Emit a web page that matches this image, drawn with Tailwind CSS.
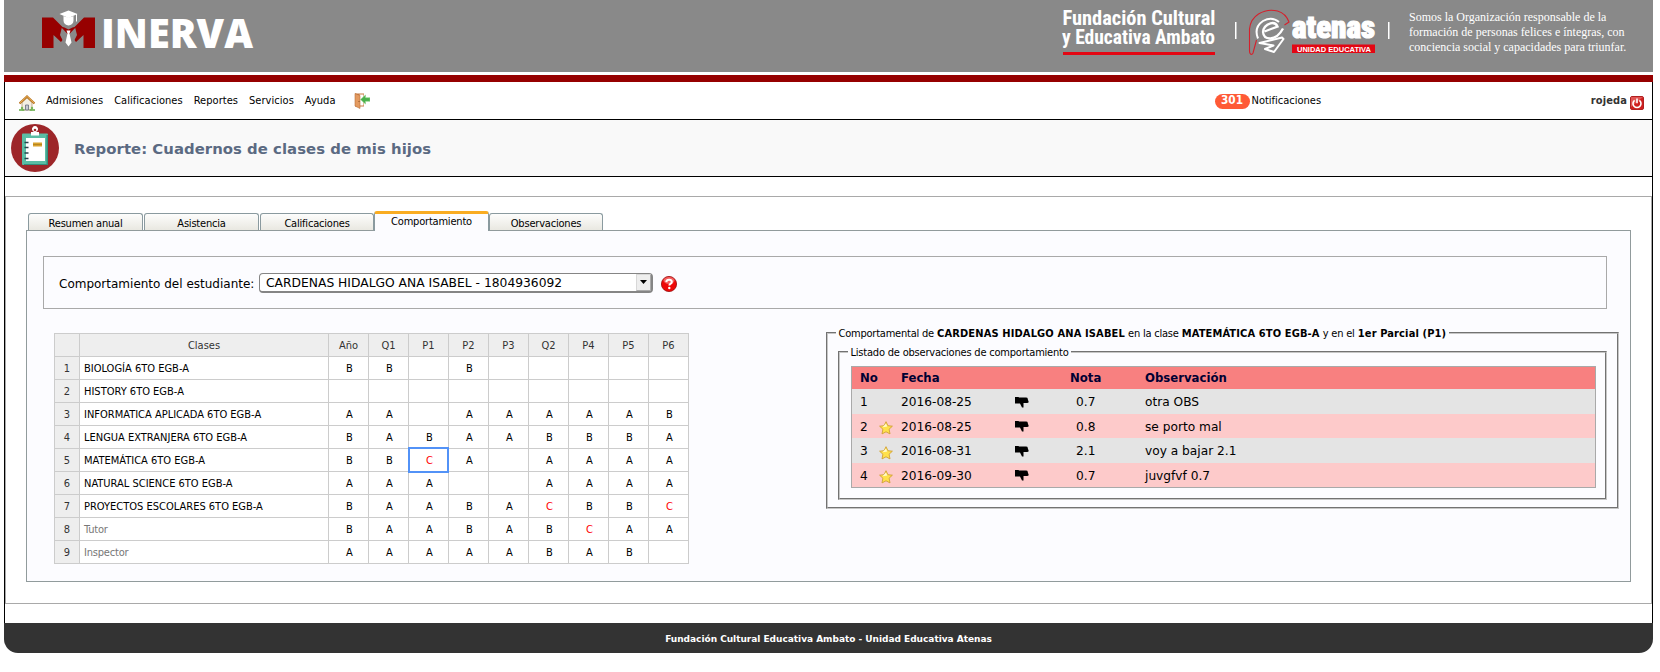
<!DOCTYPE html>
<html lang="es">
<head>
<meta charset="utf-8">
<title>Minerva</title>
<script src="https://cdn.jsdelivr.net/npm/@tailwindcss/browser@4"></script>
</head>
<body class="bg-white font-['DejaVu_Sans_Condensed','DejaVu_Sans',sans-serif] text-[11px] text-black">
<div class="ml-1 w-[1649px]">
  <header class="flex h-[72px] bg-[#898989]">
    <svg class="ml-9 mt-2 h-11 w-[225px] shrink-0" viewBox="40 8 225 44">
      <path d="M42 17.500h11L68.500 33 84 17.500h11V48H83.500V35L76 42l-3.500-4.500h-8L61 42l-7.500-7v13H42z" fill="#970000"/>
      <path d="M68.500 10.500l9 3.500-9 4-9-4z" fill="#fff"/>
      <path d="M63.500 16q5 2.500 10 0v4.500a5 5 0 0 1-10 0z" fill="#fff"/>
      <path d="M76.500 14v7.500" stroke="#fff" stroke-width="1"/>
      <path d="M62 27l6.500 2 6.500-2 2 8-6 12h-5l-6-12z" fill="#898989"/>
      <path d="M60.500 26.500l8 8.500 8-8.500-4 1-4 2-4-2z" fill="#970000"/>
      <path d="M66.500 30.500h4l-1 3 2 9-3 4-3-4 2-9z" fill="#fff"/>
      <text x="101" y="48" textLength="152" lengthAdjust="spacingAndGlyphs" font-family="Open Sans" font-weight="800" font-size="41.500" fill="#fff">INERVA</text>
    </svg>
    <svg class="ml-[795px] mt-1 h-14 w-[330px] shrink-0" viewBox="1060 4 330 56" fill="#fff">
      <text x="1062.500" y="25.300" textLength="153" lengthAdjust="spacingAndGlyphs" font-family="Roboto Condensed" font-weight="700" font-size="20">Fundación Cultural</text>
      <text x="1062" y="43.800" textLength="153" lengthAdjust="spacingAndGlyphs" font-family="Roboto Condensed" font-weight="700" font-size="20">y Educativa Ambato</text>
      <path d="M1063 52h152v3h-152z" fill="#e30613"/>
      <path d="M1235 22h1.500v17h-1.500zM1388 22h1.500v17h-1.500z"/>
      <path d="M1256.500 40l-3.500 13q-1 2-2.500 1-1-1-1-3V29q1-10 9-15 9-5.500 19-3 8.500 2.500 11.500 11l-4.500 3" fill="none" stroke="#d5202c" stroke-width="1.100"/>
      <path d="M1258 38.500q-4.500-11 5-17.500 9-5 16 1" fill="none" stroke="#fff" stroke-width="2"/>
      <path d="M1264.500 31.500l13-5q-2-4.500-7-3.200-7 2.200-7.500 8.700.5 6.500 7 6.500 8-.5 13-10" fill="none" stroke="#fff" stroke-width="2.300"/>
      <path d="M1282 37.500L1259.500 43l14 2.500-8.500 3.500 9 3 9.500-13z" fill="none" stroke="#fff" stroke-width="2" stroke-linejoin="round"/>
      <text x="1292" y="37.600" textLength="83" lengthAdjust="spacingAndGlyphs" font-family="Roboto Condensed" font-weight="900" font-size="30.500" stroke="#fff" stroke-width="1.100">atenas</text>
      <path d="M1292 44.500h83v8.500h-83z" fill="#e30613"/>
      <text x="1297" y="51.500" textLength="74" lengthAdjust="spacingAndGlyphs" font-family="Liberation Sans" font-weight="700" font-size="7.600">UNIDAD EDUCATIVA</text>
    </svg>
    <p class="ml-[19px] mt-2.5 whitespace-nowrap font-['Liberation_Serif',serif] text-[12px] leading-[15px] text-white">Somos la Organización responsable de la<br>formación de personas felices e íntegras, con<br>conciencia social y capacidades para triunfar.</p>
  </header>
  <div class="mt-[3px] h-[7px] bg-[#960000]"></div>

  <div class="h-[541px] border-x border-black">
    <nav class="flex h-[38px] items-center border-b border-black">
      <svg class="ml-3.5 mt-1 h-4 w-4" viewBox="0 0 16 16"><path d="M3 7.500l5-4.500 5 4.500V15H3z" fill="#f3eee2" stroke="#a98b60" stroke-width=".7"/><path d="M.5 8.500L8 1.500l7.500 7" fill="none" stroke="#b9731f" stroke-width="2.200"/><path d="M1 7.900L8 1.400l7 6.500" fill="none" stroke="#eebb65" stroke-width=".8"/><path d="M6.500 10h3v5h-3z" fill="#c7c9d0" stroke="#666b80" stroke-width=".8"/><path d="M0 15h5.500M10.500 15H16" stroke="#5faa43" stroke-width="1.700"/><circle cx="3" cy="13" r="1.200" fill="#77b757"/><circle cx="13" cy="13" r="1.200" fill="#77b757"/></svg>
      <div class="ml-[11px] flex gap-[11px] whitespace-nowrap leading-4 tracking-[0.04px]"><span>Admisiones</span><span>Calificaciones</span><span>Reportes</span><span>Servicios</span><span>Ayuda</span></div>
      <svg class="ml-[18px] h-4 w-4 shrink-0" viewBox="0 0 16 16"><path d="M1 .5h9v13H1z" fill="#c97b42"/><path d="M5.500 1.500h4v11h-4z" fill="#fff"/><path d="M1 .5l5 2v13l-5-2.500z" fill="#e39a60" stroke="#b9713b" stroke-width=".6"/><circle cx="5" cy="8.500" r=".6" fill="#7c451c"/><path d="M6.500 6.500l5-4.500v2.700H16v3.600h-4.500V11z" fill="#49b04c" stroke="#8ed488" stroke-width=".6"/></svg>
      <div class="ml-[845px] mt-px flex items-center gap-[2px] whitespace-nowrap"><span class="flex h-[15px] w-[35px] items-center justify-center rounded-full bg-[#ff5a36] text-[11.7px] font-bold text-white">301</span><span>Notificaciones</span></div>
      <div class="ml-auto mr-2 flex items-center gap-[3px]"><b class="mt-0.5 text-[#333] tracking-[0.1px]">rojeda</b>
        <svg class="mt-1 h-3.5 w-3.5" viewBox="0 0 14 14"><rect x=".5" y=".5" width="13" height="13" rx="1.500" fill="#cf1f1f" stroke="#b02020"/><path d="M1 1h12L1 11z" fill="#ec7a76" opacity=".6"/><path d="M4.600 4.300a4 4 0 1 0 4.800 0" fill="none" stroke="#fff" stroke-width="1.600"/><path d="M7 2.500v4.700" stroke="#fff" stroke-width="1.600"/></svg>
      </div>
    </nav>
    <div class="flex h-[57px] items-center border-b border-black bg-[#f9f9f9]">
      <svg class="ml-1.5 h-12 w-12" viewBox="0 0 48 48"><circle cx="24" cy="24" r="24" fill="#9d2629"/><rect x="11" y="9.500" width="26" height="31.500" rx="1" fill="#5abda4"/><path d="M15 14h19v23H15z" fill="#fff"/><path d="M37 11v30H13v-1h22.500V11z" fill="#348d7c"/><path d="M20 8h3.200a3 3 0 1 1 1.600 0H28v3.500h-8z" fill="#fff"/><circle cx="24" cy="6" r="1.300" fill="#9d2629"/><path d="M13.500 18.500h4M13.500 23.500h4M13.500 29h4M13.500 34.500h4" stroke="#29444c" stroke-width="1.300"/><path d="M22 18.500h9v4h-9z" fill="#d8a12c"/><path d="M22 20.500h9" stroke="#a87a1c" stroke-width=".7"/></svg>
      <h1 class="ml-[15px] mt-0.5 whitespace-nowrap font-['DejaVu_Sans'] text-[14.86px] font-bold tracking-[0.04px] text-[#5b6a82]">Reporte: Cuadernos de clases de mis hijos</h1>
    </div>

    <main class="mt-[19px] h-[408px] border border-[#a9a9a9] pl-5 pt-[14px]">
      <div class="ml-0.5 flex h-[19px] items-end text-[11px] tracking-[-0.2px] leading-4">
        <div class="mr-px h-[17px] w-[115px] rounded-t-[3px] border border-b-0 border-[#8a9a9f] bg-linear-to-b from-[#fdfdfc] to-[#e9e8e1] pt-0.5 text-center">Resumen anual</div>
        <div class="mr-px h-[17px] w-[115px] rounded-t-[3px] border border-b-0 border-[#8a9a9f] bg-linear-to-b from-[#fdfdfc] to-[#e9e8e1] pt-0.5 text-center">Asistencia</div>
        <div class="h-[17px] w-[114px] rounded-t-[3px] border border-b-0 border-[#8a9a9f] bg-linear-to-b from-[#fdfdfc] to-[#e9e8e1] pt-0.5 text-center">Calificaciones</div>
        <div class="z-10 -mb-px h-5 w-[115px] rounded-t-[3px] border-x border-t-3 border-x-[#8a9a9f] border-t-[#f9ac22] bg-[#fcfcff] text-center leading-4">Comportamiento</div>
        <div class="h-[17px] w-[114px] rounded-t-[3px] border border-b-0 border-[#8a9a9f] bg-linear-to-b from-[#fdfdfc] to-[#e9e8e1] pt-0.5 text-center">Observaciones</div>
      </div>
      <section class="h-[352px] w-[1605px] border border-[#919b9c] bg-[#fcfcff] pl-4 pt-[25px]">
        <div class="flex h-[53px] w-[1564px] items-center border border-[#a9a9a9] pl-[15px] font-['DejaVu_Sans'] text-[12px]">
          <span class="w-[200px] whitespace-nowrap pt-0.5">Comportamiento del estudiante:</span>
          <div class="flex h-5 w-[394px] items-center rounded-[4px] border border-r-2 border-b-2 border-[#858585] bg-white pl-1.5 text-[12.3px]"><span class="whitespace-nowrap pt-0.5">CARDENAS HIDALGO ANA ISABEL - 1804936092</span>
            <span class="ml-auto flex h-[17px] w-[15px] items-center justify-center border border-[#d8d8d8] border-r-[#aaa] border-b-[#aaa] bg-[#eee]"><svg class="h-1 w-[7px]" viewBox="0 0 7 4"><path d="M0 0h7L3.500 4z"/></svg></span>
          </div>
          <svg class="ml-2 mt-0.5 h-4 w-4" viewBox="0 0 16 16"><circle cx="8" cy="8" r="7.600" fill="#ee0808" stroke="#990b0b" stroke-width=".8"/><ellipse cx="8" cy="4.500" rx="5.500" ry="3.500" fill="#fff" opacity=".35"/><path d="M5.300 6.200q.2-2.400 2.800-2.400t2.700 2.100q0 1.300-1.400 2-1 .6-1 1.600" fill="none" stroke="#fff" stroke-width="2"/><circle cx="8.300" cy="12" r="1.200" fill="#fff"/></svg>
        </div>
        <div class="flex">
          <table class="ml-[11px] mt-6 w-[635px] table-fixed border-collapse self-start bg-white leading-4 [&_td]:h-[23px] [&_td]:border [&_td]:border-[#ccc] [&_td]:p-0 [&_th]:h-[23px] [&_th]:border [&_th]:border-[#ccc] [&_th]:bg-[#eee] [&_th]:p-0 [&_th]:pt-0.5 [&_th]:font-normal [&_th]:text-[#333]">
            <colgroup><col class="w-[25px]"><col class="w-[249px]"><col span="9" class="w-10"></colgroup>
            <thead><tr><th></th><th>Clases</th><th>Año</th><th>Q1</th><th>P1</th><th>P2</th><th>P3</th><th>Q2</th><th>P4</th><th>P5</th><th>P6</th></tr></thead>
            <tbody id="grades"></tbody>
          </table>
          <fieldset class="ml-[137px] mt-[17px] h-[183px] w-[793px] border-2 border-[#c6c6c6] px-2 [border-style:groove]">
            <legend class="h-3.5 whitespace-nowrap px-[2.5px] leading-[15px] [&>b]:tracking-[0.13px]"><span class="tracking-[-0.22px]">Comportamental de</span> <b>CARDENAS HIDALGO ANA ISABEL</b> <span class="tracking-[-0.22px]">en la clase</span> <b>MATEMÁTICA 6TO EGB-A</b> <span class="tracking-[-0.22px]">y en el</span> <b>1er Parcial (P1)</b></legend>
            <fieldset class="ml-0.5 mt-[5px] h-[155px] w-[769px] border-2 border-[#c6c6c6] px-2 [border-style:groove]">
              <legend class="h-3.5 whitespace-nowrap px-[2.5px] leading-[15px] tracking-[-0.2px]">Listado de observaciones de comportamiento</legend>
              <div id="notes" class="ml-[3px] mt-[7px] w-[745px] border border-[#a9a9a9] font-['DejaVu_Sans'] text-[12.2px] tracking-normal [&>div]:grid [&>div]:grid-cols-[24px_17px_114px_61px_69px_1fr] [&>div]:items-center [&>div]:pl-2 [&>div]:pt-0.5">
                <div class="h-[22px] bg-[#f88080] text-[11.7px] font-bold text-[#000033]"><span>No</span><span></span><span>Fecha</span><span></span><span class="-ml-1.5">Nota</span><span>Observación</span></div>
              </div>
            </fieldset>
          </fieldset>
        </div>
      </section>
    </main>
  </div>
  <footer class="flex h-[30px] items-center justify-center rounded-b-[14px] bg-[#333] pt-[3px] font-['DejaVu_Sans'] text-[9px] font-bold tracking-[-0.02px] text-white">Fundación Cultural Educativa Ambato - Unidad Educativa Atenas</footer>
</div>
<script>
const grades = [
  ['BIOLOGÍA 6TO EGB-A', 'BB-B-----'],
  ['HISTORY 6TO EGB-A', '---------'],
  ['INFORMATICA APLICADA 6TO EGB-A', 'AA-AAAAAB'],
  ['LENGUA EXTRANJERA 6TO EGB-A', 'BABAABBBA'],
  ['MATEMÁTICA 6TO EGB-A', 'BBCA-AAAA'],
  ['NATURAL SCIENCE 6TO EGB-A', 'AAA--AAAA'],
  ['PROYECTOS ESCOLARES 6TO EGB-A', 'BAABACBBC'],
  ['Tutor', 'BAABABCAA'],
  ['Inspector', 'AAAAABAB-']
];
document.getElementById('grades').innerHTML = grades.map(([name, marks], r) =>
  '<tr><th>' + (r + 1) + '</th><td class="whitespace-nowrap"><div class="pl-1 pt-0.5' + (r > 6 ? ' text-[#777] tracking-[-0.2px]' : '') + '">' + name + '</div></td>' +
  [...marks].map((m, c) => '<td><div class="pl-0.5 pt-0.5 text-center' + (m === 'C' ? ' text-[#f00]' : '') +
    (r === 4 && c === 2 ? ' -my-px h-6 leading-[22px] outline-2 -outline-offset-1 outline-[#5292f7]' : '') + '">' + (m === '-' ? '' : m) + '</div></td>').join('') + '</tr>').join('');

const thumb = '<svg class="mb-0.5 h-3 w-[14px]" viewBox="0 0 14 12"><path d="M0 1h3.500l.5.500h7q2 0 1.700 1.500l1 3Q13.500 7 12 7H8.500v4.500H7L5 7.500H0z"/></svg>';
const star = '<svg class="-ml-px mt-0.5 h-3.5 w-3.5" viewBox="0 0 14 14"><path d="M7 .7l1.900 4 4.500.5-3.300 3 .9 4.700L7 10.800l-4 2.100.9-4.700-3.300-3 4.500-.5z" fill="#ffe14a" stroke="#d0a035" stroke-width=".9" stroke-linejoin="round"/><path d="M7 2.500l1.200 3-4.700.800z" fill="#fffbd0"/></svg>';
const notes = [['2016-08-25', '0.7', 'otra OBS'], ['2016-08-25', '0.8', 'se porto mal'], ['2016-08-31', '2.1', 'voy a bajar 2.1'], ['2016-09-30', '0.7', 'juvgfvf 0.7']];
const rowClass = ['h-[25px] bg-[#e4e4e4]', 'h-6 bg-[#fdcaca]', 'h-[25px] bg-[#e4e4e4]', 'h-6 bg-[#fdcaca]'];
document.getElementById('notes').insertAdjacentHTML('beforeend', notes.map(([d, n, o], i) =>
  '<div class="' + rowClass[i] + '"><span>' + (i + 1) + '</span><span class="-ml-1">' + (i ? star : '') + '</span><span>' + d + '</span><span>' + thumb + '</span><span>' + n + '</span><span>' + o + '</span></div>').join(''));
</script>
</body>
</html>
